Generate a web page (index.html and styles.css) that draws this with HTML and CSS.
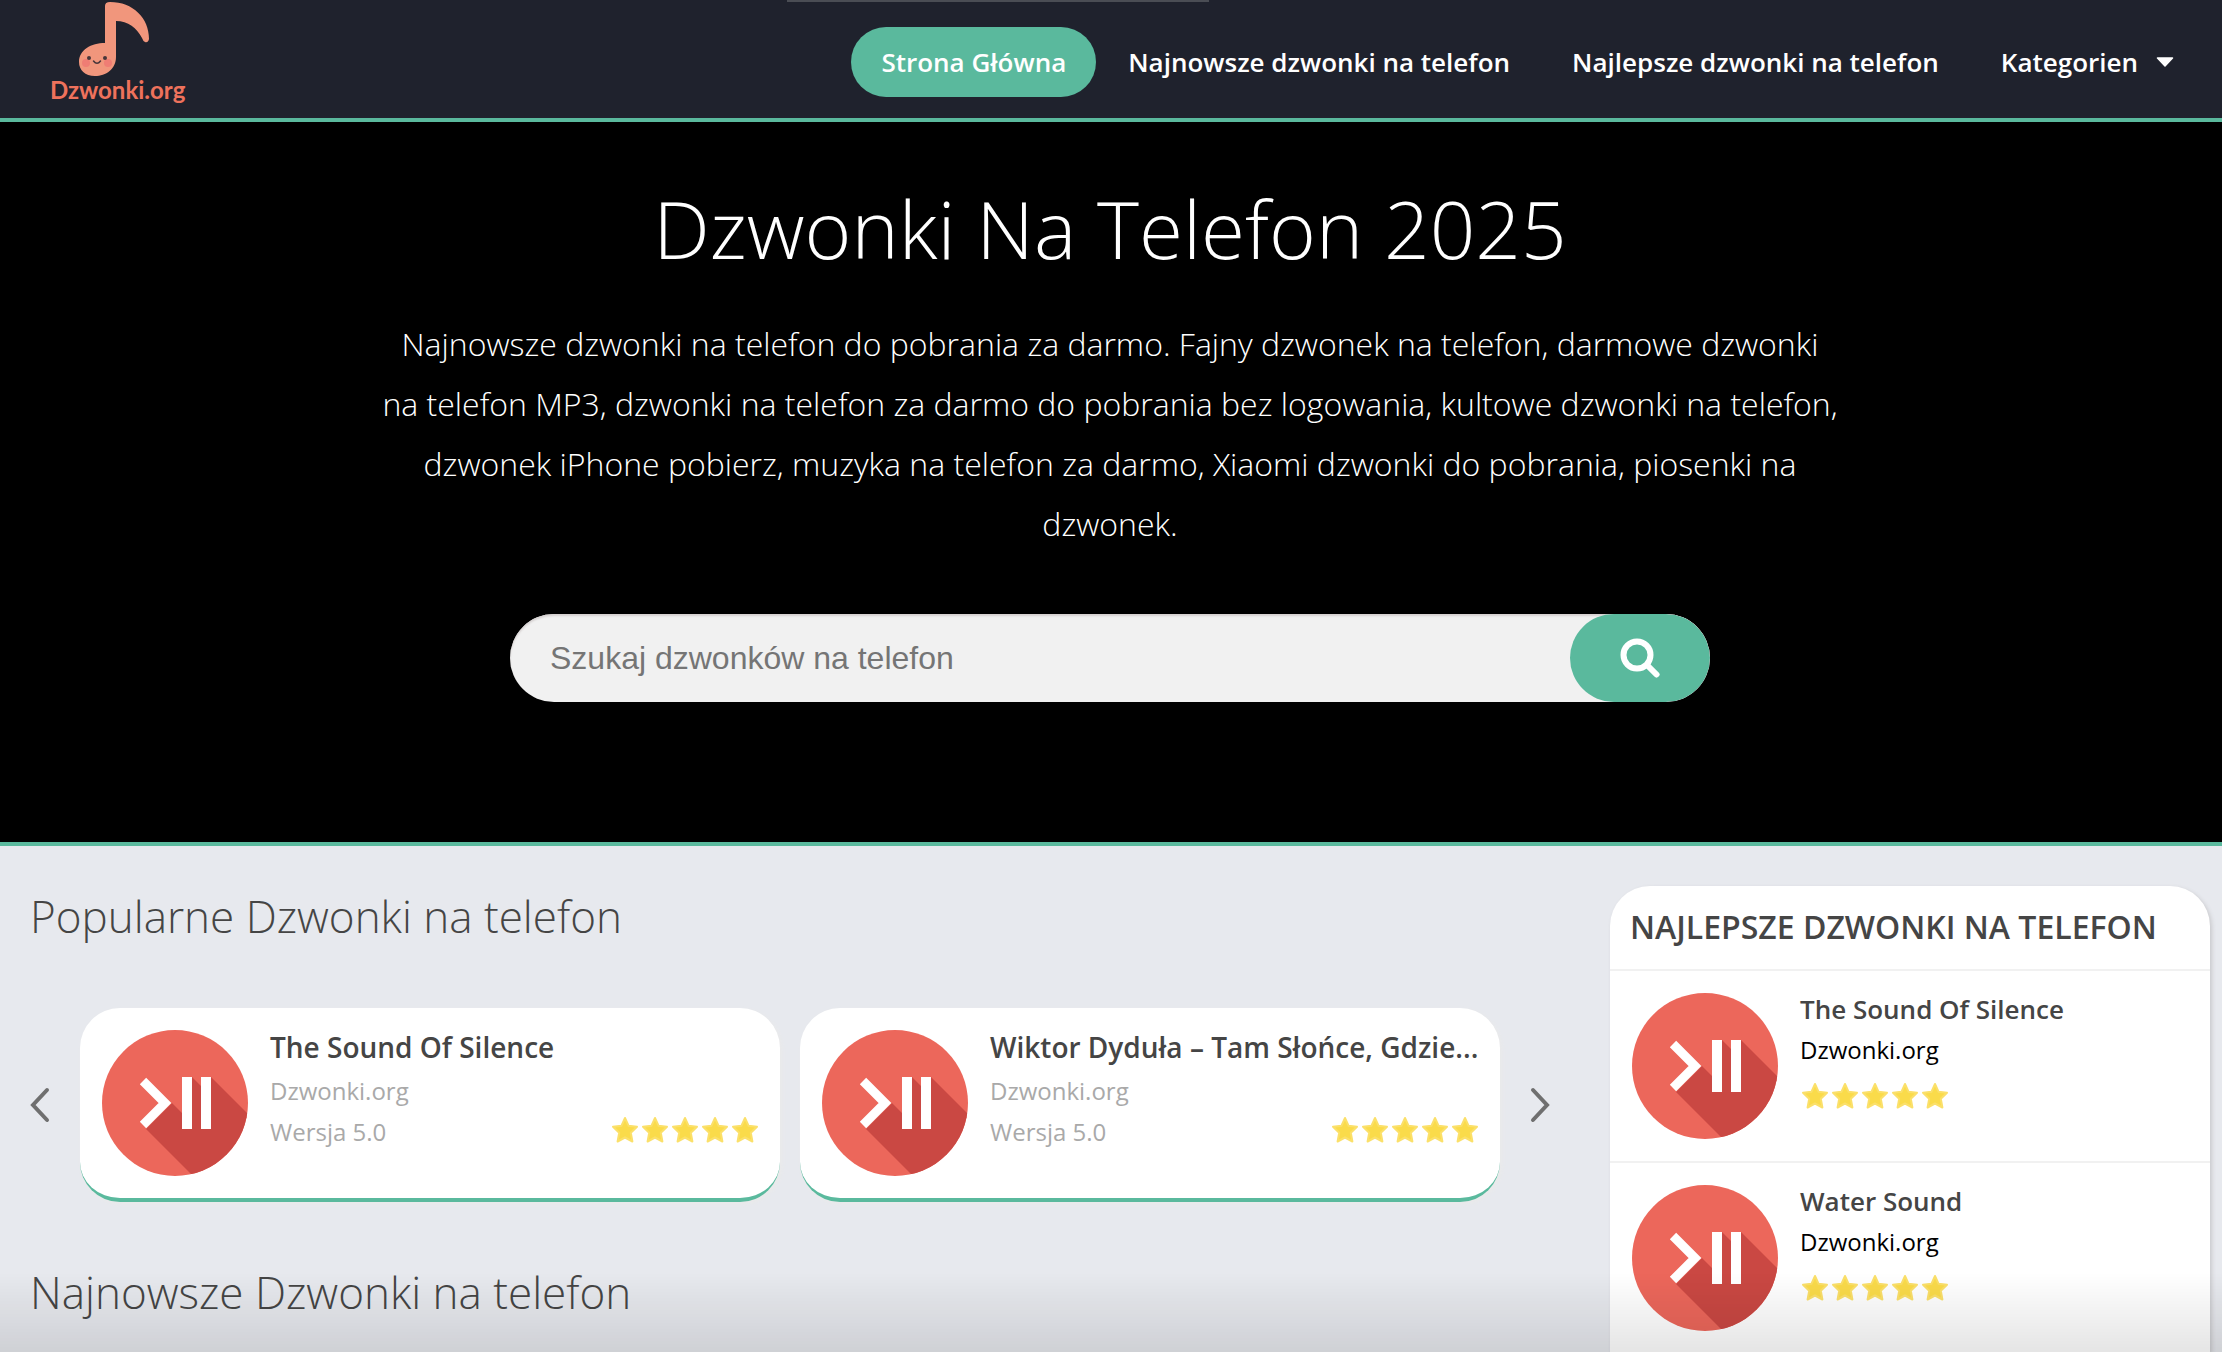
FILE: index.html
```html
<!DOCTYPE html>
<html lang="pl">

<head>
    <meta charset="utf-8">
    <title>Dzwonki Na Telefon 2025</title>
    <link rel="stylesheet" href="styles.css">
</head>

<body>
    <!-- shared icons -->
    <svg class="sprite" aria-hidden="true">
        <symbol id="app-icon" viewBox="0 0 146 146">
            <clipPath id="disc">
                <circle cx="73" cy="73" r="73" />
            </clipPath>
            <circle cx="73" cy="73" r="73" fill="#ec675b" />
            <g clip-path="url(#disc)">
                <path d="M44 99 L70 73 L80 83 V47 H90 L99 56 V47 H109 L146 84 V146 H91 Z" fill="#ca4843" />
            </g>
            <path d="M80 83 V47 H90 V99 H80 Z M99 47 H109 V99 H99 Z" fill="#fff" />
            <path d="M41 51 L63 73 L41 95" fill="none" stroke="#fff" stroke-width="9" />
        </symbol>
        <symbol id="stars" viewBox="0 0 150 30">
            <path id="star" d="M15 3 L18.600 10.800 L27 11.800 L20.800 17.700 L22.400 26.500 L15 22.500 L7.600 26.500 L9.200 17.700 L3 11.800 L11.400 10.800 Z" fill="#fadb4a" stroke="#fbe06a" stroke-width="2" stroke-linejoin="round" />
            <use href="#star" x="30" />
            <use href="#star" x="60" />
            <use href="#star" x="90" />
            <use href="#star" x="120" />
        </symbol>
    </svg>

    <header class="header">
        <a class="logo" href="#">
            <svg class="logo-note" viewBox="0 0 70 76" aria-hidden="true">
                <path d="M26 5 Q26 1 31 1 C54 1 70 17 70 38 Q69 42 66 41 Q64 40 63 37 C58 27 49 20 37 20 V56 C37 68 27 75 16 75 C6 75 0 69 0 61 C0 49 12 42 26 42 Z" fill="#f1967c" />
                <circle cx="7" cy="62" r="4" fill="#ef7d74" />
                <circle cx="29" cy="62" r="4" fill="#ef7d74" />
                <circle cx="10" cy="57" r="2" fill="#47363a" />
                <circle cx="26" cy="57" r="2" fill="#47363a" />
                <path d="M14.500 60 Q18 64.500 21.500 60" fill="none" stroke="#47363a" stroke-width="1.500" stroke-linecap="round" />
            </svg>
            <span class="logo-text">Dzwonki.org</span>
        </a>
        <nav class="nav">
            <a class="nav-item active" href="#">Strona Główna</a>
            <a class="nav-item" href="#">Najnowsze dzwonki na telefon</a>
            <a class="nav-item" href="#">Najlepsze dzwonki na telefon</a>
            <button class="nav-item" type="button">Kategorien
                <svg class="caret" viewBox="0 0 18 10" aria-hidden="true">
                    <path d="M1.500 1 H16.500 L9 9 Z" fill="#fff" stroke="#fff" stroke-width="1.500" stroke-linejoin="round" />
                </svg>
            </button>
        </nav>
    </header>
    <div class="load-bar"></div>

    <section class="hero">
        <h1>Dzwonki Na Telefon 2025</h1>
        <p>Najnowsze dzwonki na telefon do pobrania za darmo. Fajny dzwonek na telefon, darmowe dzwonki na telefon MP3, dzwonki na telefon za darmo do pobrania bez logowania, kultowe dzwonki na telefon, dzwonek iPhone pobierz, muzyka na telefon za darmo, Xiaomi dzwonki do pobrania, piosenki na dzwonek.</p>
        <form class="search">
            <input type="text" placeholder="Szukaj dzwonków na telefon" aria-label="Szukaj dzwonków na telefon">
            <button type="button" aria-label="Szukaj">
                <svg viewBox="0 0 40 40" aria-hidden="true">
                    <circle cx="17" cy="17" r="13.500" />
                    <path d="M27 27 L36.500 36.500" />
                </svg>
            </button>
        </form>
    </section>

    <main class="main">
        <div class="content">
            <h2>Popularne Dzwonki na telefon</h2>
            <div class="slider">
                <button class="arrow" type="button" aria-label="Poprzednie">
                    <svg viewBox="0 0 20 36" aria-hidden="true"><path d="M17 3 L3 18 L17 33" /></svg>
                </button>
                <a class="card" href="#">
                    <svg class="app-icon" aria-hidden="true"><use href="#app-icon" /></svg>
                    <div class="card-info">
                        <h3>The Sound Of Silence</h3>
                        <span class="muted">Dzwonki.org</span>
                        <div class="card-row">
                            <span class="muted">Wersja 5.0</span>
                            <svg class="stars" role="img" aria-label="5/5"><use href="#stars" /></svg>
                        </div>
                    </div>
                </a>
                <a class="card" href="#">
                    <svg class="app-icon" aria-hidden="true"><use href="#app-icon" /></svg>
                    <div class="card-info">
                        <h3>Wiktor Dyduła – Tam Słońce, Gdzie...</h3>
                        <span class="muted">Dzwonki.org</span>
                        <div class="card-row">
                            <span class="muted">Wersja 5.0</span>
                            <svg class="stars" role="img" aria-label="5/5"><use href="#stars" /></svg>
                        </div>
                    </div>
                </a>
                <button class="arrow" type="button" aria-label="Następne">
                    <svg viewBox="0 0 20 36" aria-hidden="true"><path d="M3 3 L17 18 L3 33" /></svg>
                </button>
            </div>
            <h2>Najnowsze Dzwonki na telefon</h2>
        </div>

        <aside class="sidebar">
            <h2>NAJLEPSZE DZWONKI NA TELEFON</h2>
            <a class="side-item" href="#">
                <svg class="app-icon" aria-hidden="true"><use href="#app-icon" /></svg>
                <div class="side-info">
                    <h3>The Sound Of Silence</h3>
                    <span>Dzwonki.org</span>
                    <svg class="stars" role="img" aria-label="5/5"><use href="#stars" /></svg>
                </div>
            </a>
            <a class="side-item" href="#">
                <svg class="app-icon" aria-hidden="true"><use href="#app-icon" /></svg>
                <div class="side-info">
                    <h3>Water Sound</h3>
                    <span>Dzwonki.org</span>
                    <svg class="stars" role="img" aria-label="5/5"><use href="#stars" /></svg>
                </div>
            </a>
        </aside>
    </main>
    <div class="bottom-shade"></div>
</body>

</html>
```
FILE: styles.css
```css
* {
    box-sizing: border-box;
}

body {
    margin: 0;
    min-height: 100vh;
    display: flex;
    flex-direction: column;
    background-color: #e7e9ee;
    color: #454545;
    font-family: "Open Sans", "Noto Sans", sans-serif;
}

h1,
h2,
h3,
p {
    margin: 0;
}

a {
    color: inherit;
    text-decoration: none;
}

button {
    border: 0;
    background: none;
    font-family: inherit;
    cursor: pointer;
}

.sprite {
    position: absolute;
    width: 0;
    height: 0;
}

/* header */
.header {
    display: flex;
    justify-content: space-between;
    align-items: flex-start;
    height: 122px;
    padding: 0 18px 0 50px;
    background-color: #1f222d;
    border-bottom: 4px solid #5ab99d;
}

.load-bar {
    position: absolute;
    top: 0;
    left: 787px;
    width: 422px;
    height: 2px;
    background-color: #4a4d54;
}

.logo {
    display: flex;
    flex-direction: column;
    align-items: center;
    padding-top: 1px;
    color: #ee725c;
}

.logo-note {
    width: 70px;
    height: 76px;
    margin-right: 8px;
}

.logo-text {
    font-family: Lato, sans-serif;
    font-size: 24px;
    font-weight: bold;
    line-height: 26px;
}

.nav {
    display: flex;
    gap: 2px;
    padding-top: 27px;
}

.nav-item {
    display: flex;
    align-items: center;
    gap: 18px;
    height: 70px;
    padding: 0 30px;
    border-radius: 35px;
    color: #fff;
    font-size: 26px;
    font-weight: 600;
    white-space: nowrap;
}

.nav-item.active {
    background-color: #5ab99d;
}

.caret {
    width: 18px;
    height: 10px;
}

/* hero */
.hero {
    display: flex;
    flex-direction: column;
    align-items: center;
    padding: 50px 32px 140px 30px;
    background-color: #000;
    border-bottom: 4px solid #5ab99d;
    color: #fff;
    text-align: center;
}

.hero h1 {
    font-size: 80px;
    font-weight: 300;
    line-height: 112px;
}

.hero p {
    max-width: 1460px;
    margin-top: 30px;
    font-size: 32px;
    font-weight: 300;
    line-height: 60px;
}

.search {
    display: flex;
    width: 100%;
    max-width: 1200px;
    height: 88px;
    margin-top: 60px;
    border-radius: 44px;
    background-color: #f1f1f1;
    box-shadow: inset 0 2px 2px #d5d0d0;
    overflow: hidden;
}

.search input {
    flex: 1;
    padding: 0 40px;
    border: 0;
    outline: 0;
    background: none;
    font-family: "Liberation Sans", Arial, sans-serif;
    font-size: 32px;
}

.search input::placeholder {
    color: #757575;
}

.search button {
    display: flex;
    justify-content: center;
    align-items: center;
    width: 140px;
    border-radius: 44px;
    background-color: #5ab99d;
}

.search svg {
    width: 40px;
    height: 40px;
    fill: none;
    stroke: #fff;
    stroke-width: 6;
    stroke-linecap: round;
}

/* main columns */
.main {
    flex: 1;
    display: flex;
    gap: 30px;
    padding: 40px 12px 0 30px;
}

.content {
    flex: 1;
    min-width: 0;
}

.content h2 {
    font-size: 44px;
    font-weight: 300;
    line-height: 60px;
}

.slider {
    display: flex;
    align-items: center;
    gap: 20px;
    margin: 62px 20px 60px 0;
}

.arrow {
    display: flex;
    width: 30px;
    padding: 0;
}

.arrow:last-child {
    justify-content: center;
    width: 40px;
}

.arrow svg {
    width: 20px;
    height: 36px;
    fill: none;
    stroke: #6f6f6f;
    stroke-width: 4;
    stroke-linecap: round;
}

.card {
    flex: 1;
    display: flex;
    gap: 22px;
    min-width: 0;
    padding: 22px 20px 22px 22px;
    border-bottom: 4px solid #5ab99d;
    border-radius: 40px;
    background-color: #fff;
    box-shadow: 2px 2px 4px #eaeaea;
}

.app-icon {
    flex: none;
    width: 146px;
    height: 146px;
}

.card-info {
    flex: 1;
    min-width: 0;
}

.card h3 {
    margin-bottom: 4px;
    font-size: 28px;
    font-weight: 600;
    line-height: 34px;
    white-space: nowrap;
}

.muted {
    display: block;
    padding-top: 4px;
    color: #a9a9a9;
    font-size: 24px;
    line-height: 37px;
}

.card-row {
    display: flex;
    justify-content: space-between;
    align-items: center;
}

.stars {
    display: block;
    width: 150px;
    height: 30px;
}

/* sidebar */
.sidebar {
    width: 600px;
    border-radius: 40px 40px 0 0;
    background-color: #fff;
    box-shadow: 2px 2px 4px #c9c9cc;
}

.sidebar h2 {
    padding: 20px 20px 21px;
    font-size: 32px;
    font-weight: 600;
    line-height: 42px;
    white-space: nowrap;
}

.side-item {
    display: flex;
    gap: 22px;
    padding: 22px;
    border-top: 2px solid #f1f1f1;
}

.side-item:last-child {
    padding-bottom: 20px;
}

.side-item h3 {
    font-size: 26px;
    font-weight: 600;
    line-height: 32px;
}

.side-info span {
    display: block;
    margin: 6px 0 12px;
    color: #000;
    font-size: 24px;
    line-height: 38px;
}

/* fade over the bottom edge of the window */
.bottom-shade {
    position: fixed;
    right: 0;
    bottom: 0;
    left: 0;
    height: 80px;
    background: linear-gradient(rgba(0, 0, 0, 0), rgba(0, 0, 0, 0.1));
    pointer-events: none;
}
```
